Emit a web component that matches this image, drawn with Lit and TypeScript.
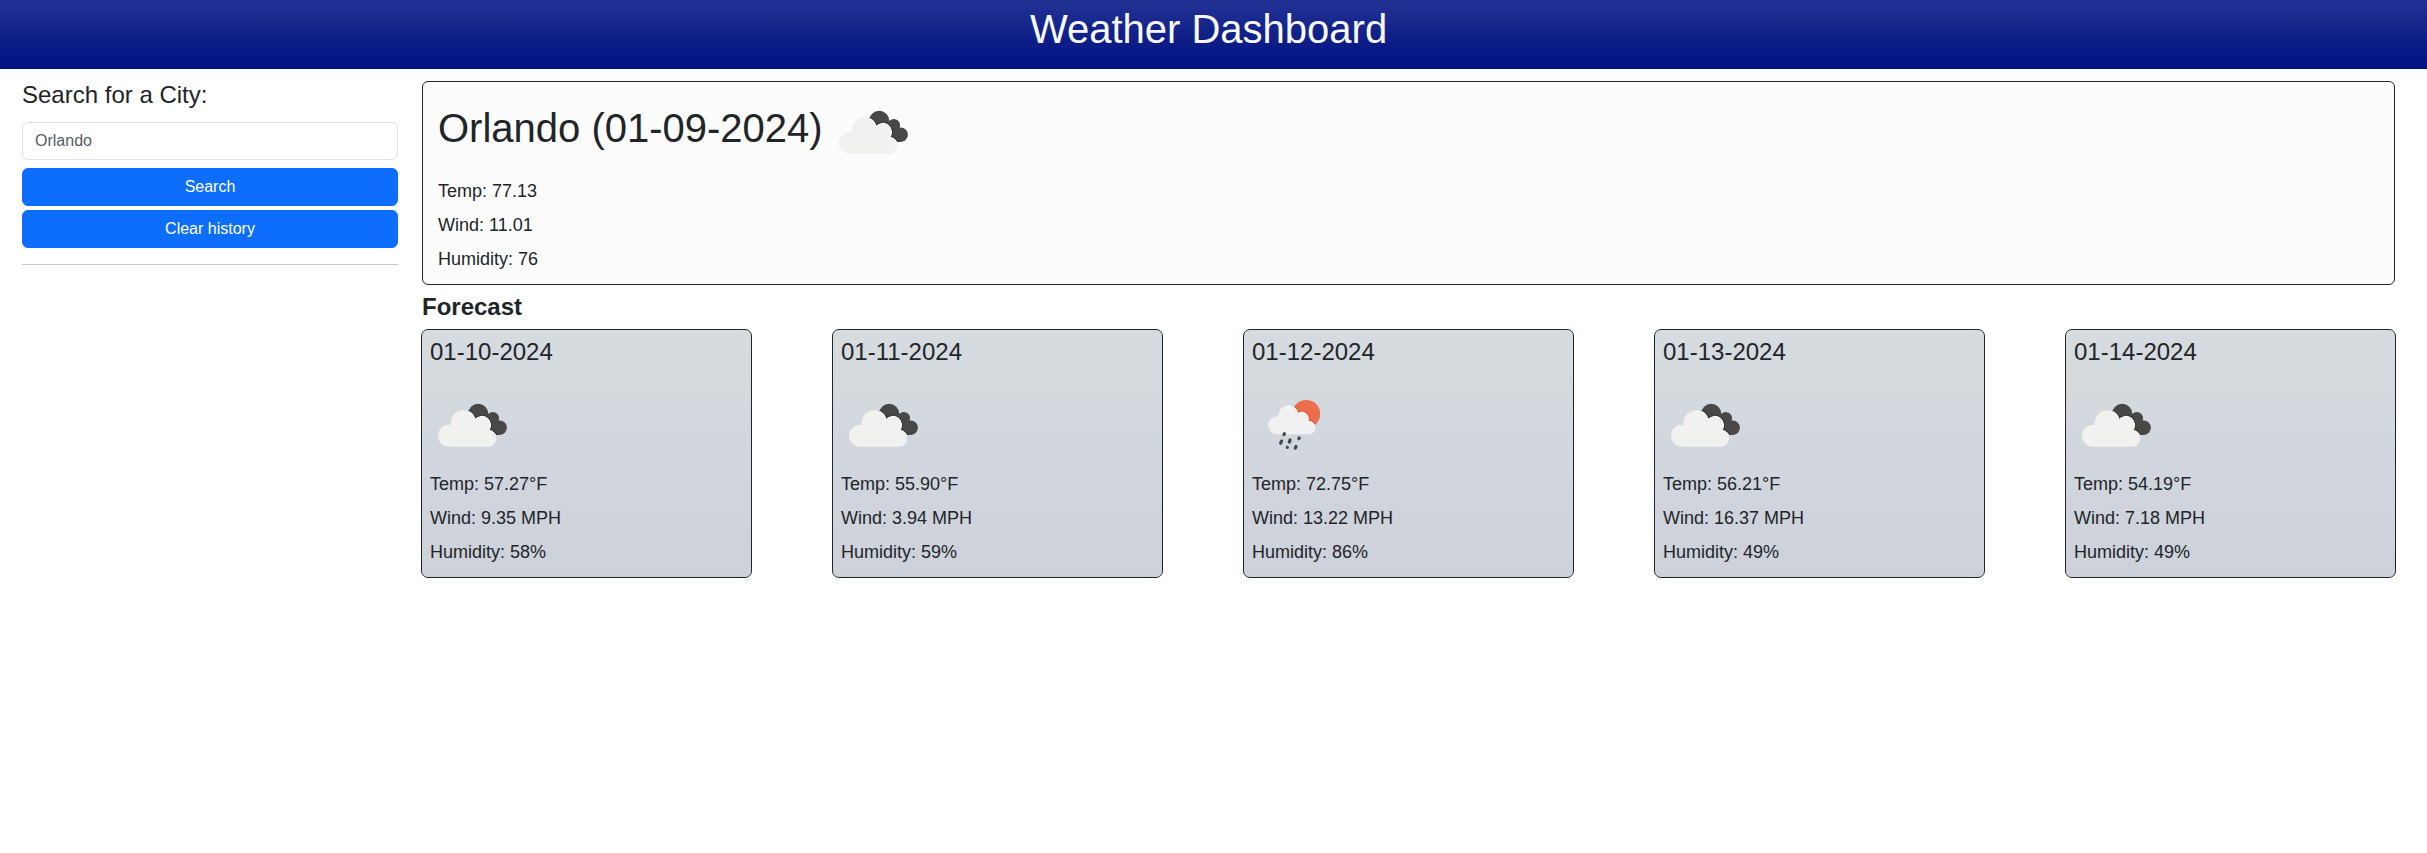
import { LitElement, html, svg, css } from "lit";
import { customElement, property, state } from "lit/decorators.js";

type Sky = "clouds" | "rain";

interface Day {
  date: string;
  sky: Sky;
  temp: string;
  wind: string;
  humidity: string;
}

const forecast: Day[] = [
  { date: "01-10-2024", sky: "clouds", temp: "57.27", wind: "9.35", humidity: "58" },
  { date: "01-11-2024", sky: "clouds", temp: "55.90", wind: "3.94", humidity: "59" },
  { date: "01-12-2024", sky: "rain", temp: "72.75", wind: "13.22", humidity: "86" },
  { date: "01-13-2024", sky: "clouds", temp: "56.21", wind: "16.37", humidity: "49" },
  { date: "01-14-2024", sky: "clouds", temp: "54.19", wind: "7.18", humidity: "49" },
];

@customElement("weather-icon")
class WeatherIcon extends LitElement {
  @property() sky: Sky = "clouds";

  static styles = css`
    :host {
      display: block;
      flex: none;
    }
    .icon {
      display: block;
      width: 85px;
      height: 96px;
    }
  `;

  private clouds() {
    const front = "M19 71.7A11 11 0 0 1 19 49.7H20.7V47A12.3 12.3 0 0 1 45 44.9A8.5 8.5 0 0 1 58.6 55.4A8.2 8.2 0 0 1 59.2 71.7Z";
    return svg`
      <defs>
        <clipPath id="back">
          <circle cx="48.2" cy="38.8" r="10.1"></circle>
          <circle cx="62.8" cy="43.2" r="6.2"></circle>
          <circle cx="69.6" cy="52.7" r="7.3"></circle>
          <path d="M42 44L57 38L68 44L70 60H58Z"></path>
        </clipPath>
      </defs>
      <g clip-path="url(#back)">
        <rect width="85" height="96" fill="#484849"></rect>
        <path d=${front} fill="none" stroke="#2b2b2c" stroke-width="3"></path>
        <path d=${front} fill="#fff" stroke="#fff" stroke-width="1.4"></path>
      </g>
      <path d=${front} fill="#f1f1f0"></path>`;
  }

  private rain() {
    const front = "M25.2 59.3A9 9 0 0 1 25.2 41.3H26.5V39.3A10 10 0 0 1 46.2 37.8A6.9 6.9 0 0 1 56.5 45.7A6.8 6.8 0 0 1 57.2 59.3Z";
    return svg`
      <defs>
        <clipPath id="sun"><circle cx="54.2" cy="39" r="14"></circle></clipPath>
      </defs>
      <g clip-path="url(#sun)">
        <rect width="85" height="96" fill="#ec6e4c"></rect>
        <path d=${front} fill="none" stroke="#e4502c" stroke-width="2"></path>
      </g>
      <path d=${front} fill="#f1f1f1"></path>
      <g stroke="#484849" stroke-width="3.2" stroke-linecap="round">
        <path d="M32.4 58.6L31.9 59.6M29.5 66.1L28.7 68.3M38.1 64.9L37.3 67.1M47.2 63L46.9 63.7M35.3 72.3H35.4M44 71.5L43.3 73.2"></path>
      </g>`;
  }

  render() {
    return html`<svg class="icon" viewBox="0 0 85 96" aria-hidden="true">
      ${this.sky === "rain" ? this.rain() : this.clouds()}
    </svg>`;
  }
}

@customElement("app-root")
class AppRoot extends LitElement {
  @state() private days = forecast;

  static styles = css`
    :host {
      display: block;
      color: #212529;
      background: #fff;
      font: 18px/26px "Liberation Sans", Arial, sans-serif;
    }
    * {
      box-sizing: border-box;
    }
    h1, h2, h3, p {
      margin: 0;
      font-weight: 400;
    }
    .header {
      padding: 5px 20px 16px 10px;
      text-align: center;
      color: #f8f9fa;
      background: linear-gradient(#223293, #001080);
    }
    .big {
      font-size: 40px;
      line-height: 48px;
    }
    .title {
      font-size: 24px;
      line-height: 27px;
    }
    .layout {
      display: grid;
      grid-template-columns: 376fr 1973fr;
      gap: 24px;
      padding: 12px 32px 24px 22px;
    }
    .search {
      display: flex;
      flex-direction: column;
    }
    .search label {
      margin-bottom: 14px;
    }
    .field, .btn {
      width: 100%;
      height: 38px;
      font: 16px/24px "Liberation Sans", Arial, sans-serif;
      border-radius: 6px;
    }
    .field {
      margin-bottom: 8px;
      padding: 6px 12px;
      color: #212529;
      background: #fff;
      border: 1px solid #dee2e6;
    }
    .field::placeholder {
      color: #595c5f;
      opacity: 1;
    }
    .btn {
      margin-bottom: 4px;
      padding: 6px 12px;
      color: #fff;
      background: #0d6efd;
      border: 1px solid #0d6efd;
      cursor: pointer;
    }
    .rule {
      width: 100%;
      margin: 12px 0 16px;
      border: 0;
      border-top: 1px solid #c7c8c9;
    }
    .current {
      padding: 0 15px 12px;
      background: #fcfcfc;
      border: 1px solid #212529;
      border-radius: 6px;
    }
    .place {
      display: flex;
      align-items: center;
      gap: 8px;
    }
    .place .big {
      padding-bottom: 4px;
    }
    .readings {
      display: grid;
      gap: 8px;
    }
    .forecast {
      margin: 8px 0 10px;
      font-weight: 700;
    }
    .cards {
      display: grid;
      grid-template-columns: repeat(5, 1fr);
      gap: 82px;
    }
    .card {
      padding: 8px 8px 12px;
      background: linear-gradient(#d6dbdf, #d3d9dd 30%, #d1d6df 50%, #cdd1d9);
      outline: 1px solid #212529;
      border-radius: 6px;
    }
    .date {
      margin-bottom: 10px;
    }
  `;

  render() {
    return html`
      <header class="header"><h1 class="big">Weather Dashboard</h1></header>
      <div class="layout">
        <aside>
          <form class="search" @submit=${(e: Event) => e.preventDefault()}>
            <label class="title" for="city">Search for a City:</label>
            <input class="field" id="city" type="text" placeholder="Orlando" />
            <button class="btn" type="submit">Search</button>
            <button class="btn" type="button">Clear history</button>
          </form>
          <hr class="rule" />
        </aside>
        <main>
          <section class="current">
            <div class="place">
              <h2 class="big">Orlando (01-09-2024)</h2>
              <weather-icon sky="clouds"></weather-icon>
            </div>
            <div class="readings">
              <p>Temp: 77.13</p>
              <p>Wind: 11.01</p>
              <p>Humidity: 76</p>
            </div>
          </section>
          <h2 class="title forecast">Forecast</h2>
          <section class="cards">
            ${this.days.map(
              (d) => html`<article class="card">
                <h3 class="title date">${d.date}</h3>
                <weather-icon sky=${d.sky}></weather-icon>
                <div class="readings">
                  <p>Temp: ${d.temp}°F</p>
                  <p>Wind: ${d.wind} MPH</p>
                  <p>Humidity: ${d.humidity}%</p>
                </div>
              </article>`
            )}
          </section>
        </main>
      </div>
    `;
  }
}
